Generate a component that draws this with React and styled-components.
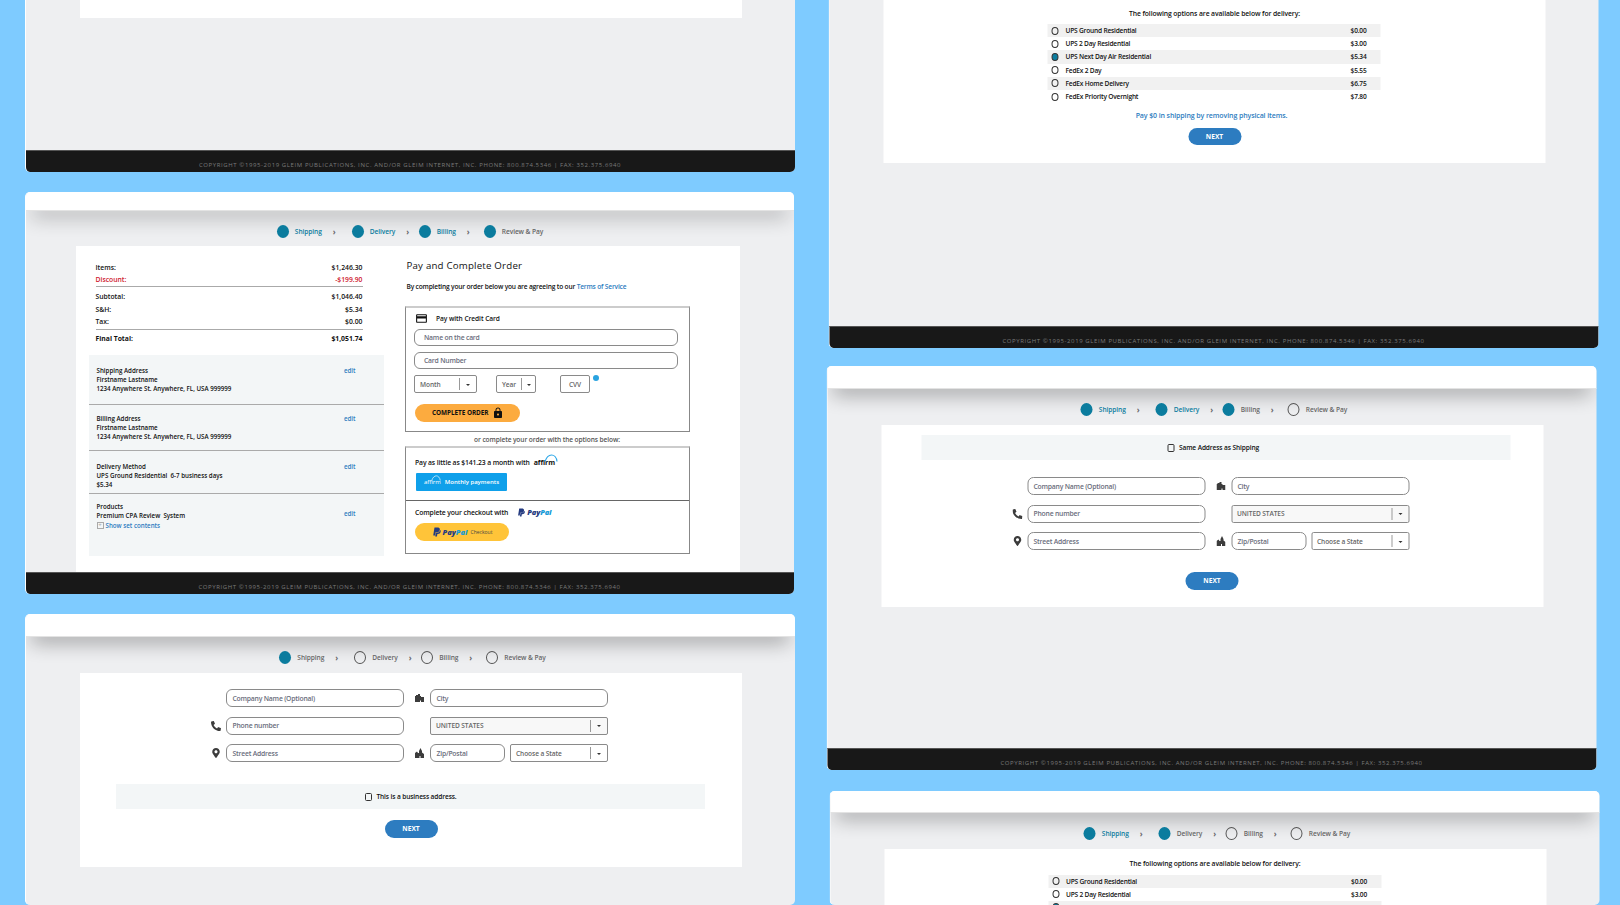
import React from 'react';
import styled, { createGlobalStyle } from 'styled-components';
import { FaPhoneAlt, FaMapMarkerAlt, FaPaypal } from 'react-icons/fa';
import { MdCreditCard, MdLock } from 'react-icons/md';

const COPYRIGHT = 'COPYRIGHT ©1995-2019 GLEIM PUBLICATIONS, INC. AND/OR GLEIM INTERNET, INC. PHONE: 800.874.5346 | FAX: 352.375.6940';
const STEP_NAMES = ['Shipping', 'Delivery', 'Billing', 'Review & Pay'];
const STEP_WIDTHS = [75, 67, 65, 'auto'];

const OPTIONS = [
  ['UPS Ground Residential', '$0.00'],
  ['UPS 2 Day Residential', '$3.00'],
  ['UPS Next Day Air Residential', '$5.34'],
  ['FedEx 2 Day', '$5.55'],
  ['FedEx Home Delivery', '$6.75'],
  ['FedEx Priority Overnight', '$7.80'],
];

const App = () => {
  return (
    <Page>
      <GlobalStyle />
      <Column>
        <Card $height={172} $cut>
          <Main><Panel $left={54} $width={662} $height={18} /></Main>
          <Footer>{COPYRIGHT}</Footer>
        </Card>

        <Card $height={402} $width={769}>
          <Header $height={19} />
          <ProgressSteps filled={4} active={3} height={35} offset={0} />
          <Main>
            <Panel $left={49.5} $width={664} $height={326}>
              <Checkout />
            </Panel>
          </Main>
          <Footer>{COPYRIGHT}</Footer>
        </Card>

        <Card $height={291}>
          <Header $height={23} />
          <ProgressSteps filled={1} active={0} />
          <Main>
            <Panel $left={54} $width={662} $height={194} $pad={16}>
              <AddressForm />
              <Strip $top={22} $inset={2}><CheckBox />This is a business address.</Strip>
              <NextButton $top={11}>NEXT</NextButton>
            </Panel>
          </Main>
        </Card>
      </Column>

      <Column $right>
        <Card $height={348} $cut $shift={1.5}>
          <Main>
            <Panel $left={54} $width={662} $height={163} $pad={8.5}>
              <DeliveryOptions selected={2} />
              <ShippingLink>Pay $0 in shipping by removing physical items.</ShippingLink>
              <NextButton $top={7}>NEXT</NextButton>
            </Panel>
          </Main>
          <Footer>{COPYRIGHT}</Footer>
        </Card>

        <Card $height={404} $shift={-0.5} $top={18}>
          <Header $height={23} />
          <ProgressSteps filled={3} active={2} />
          <Main>
            <Panel $left={53.5} $width={662} $height={182} $pad={10}>
              <Strip $left={40.5} $inset={-5}><CheckBox />Same Address as Shipping</Strip>
              <FormSpacer />
              <AddressForm />
              <NextButton $top={22}>NEXT</NextButton>
            </Panel>
          </Main>
          <Footer>{COPYRIGHT}</Footer>
        </Card>

        <Card $height={114} $shift={2.5} $top={21}>
          <Header $height={22} />
          <ProgressSteps filled={2} active={1} />
          <Main>
            <Panel $left={53.5} $width={662} $height={56} $pad={10}>
              <DeliveryOptions selected={2} count={3} />
            </Panel>
          </Main>
        </Card>
      </Column>
    </Page>
  );
};

const ProgressSteps = ({ filled, active, height = 36, offset = 4 }) => (
  <Steps $height={height} $offset={offset}>
    {STEP_NAMES.map((name, i) => (
      <Step key={name} style={{ width: STEP_WIDTHS[i] }}>
        <StepDot $filled={i < filled} />
        <StepLabel $active={i < active}>{name}</StepLabel>
        {i < 3 && <StepArrow>›</StepArrow>}
      </Step>
    ))}
  </Steps>
);

const CityIcon = () => (
  <svg width="9" height="8" viewBox="0 0 9 8" fill="currentColor">
    <path d="M0 8V2h1V1h2V0h2v2h1v1h3v5H6V6.500H5V8H0z" />
  </svg>
);

const ZipIcon = () => (
  <svg width="9" height="10" viewBox="0 0 9 10" fill="currentColor">
    <path d="M0 10V5l2-1.500L3 5h1V3l1.500-3L7 3v1.500L9 6v4H5.500V8h-1v2H0z" />
  </svg>
);

const AddressForm = () => (
  <FormGrid>
    <span />
    <Field>Company Name (Optional)</Field>
    <FieldIcon $right><CityIcon /></FieldIcon>
    <Field>City</Field>

    <FieldIcon><FaPhoneAlt /></FieldIcon>
    <Field>Phone number</Field>
    <span />
    <SelectBox $tinted>UNITED STATES<SelectCaret /></SelectBox>

    <FieldIcon><FaMapMarkerAlt /></FieldIcon>
    <Field>Street Address</Field>
    <FieldIcon $right><ZipIcon /></FieldIcon>
    <ZipRow>
      <Field>Zip/Postal</Field>
      <SelectBox>Choose a State<SelectCaret /></SelectBox>
    </ZipRow>
  </FormGrid>
);

const DeliveryOptions = ({ selected, count = OPTIONS.length }) => (
  <>
    <OptionsTitle>The following options are available below for delivery:</OptionsTitle>
    <OptionsTable>
      {OPTIONS.slice(0, count).map(([name, price], i) => (
        <OptionRow key={name}>
          <Radio $checked={i === selected} />
          <span>{name}</span>
          <OptionPrice>{price}</OptionPrice>
        </OptionRow>
      ))}
    </OptionsTable>
  </>
);

const AffirmMark = () => (
  <AffirmArc width="14" height="8" viewBox="0 0 14 8">
    <path d="M1 7.500C2.500 3 5 1 7.500 1S12.500 3.500 13 7.500" />
  </AffirmArc>
);

const Checkout = () => (
  <CheckoutGrid>
    <div>
      <Summary>
        <SummaryRow><span>Items:</span><span>$1,246.30</span></SummaryRow>
        <SummaryRow $red><span>Discount:</span><span>-$199.90</span></SummaryRow>
        <SummaryRule $thick />
        <SummaryRow $top={3}><span>Subtotal:</span><span>$1,046.40</span></SummaryRow>
        <SummaryRow $top={1}><span>S&amp;H:</span><span>$5.34</span></SummaryRow>
        <SummaryRow><span>Tax:</span><span>$0.00</span></SummaryRow>
        <SummaryRule />
        <SummaryRow $bold $top={2}><span>Final Total:</span><span>$1,051.74</span></SummaryRow>
      </Summary>
      <ReviewBlock>
        <ReviewItem $height={50} $pad={11}>
          <div>Shipping Address<br />Firstname Lastname<br />1234 Anywhere St. Anywhere, FL, USA 999999</div>
          <EditLink>edit</EditLink>
        </ReviewItem>
        <ReviewItem $height={46} $pad={8.5}>
          <div>Billing Address<br />Firstname Lastname<br />1234 Anywhere St. Anywhere, FL, USA 999999</div>
          <EditLink>edit</EditLink>
        </ReviewItem>
        <ReviewItem $height={43} $pad={10.5}>
          <div>Delivery Method<br />UPS Ground Residential&nbsp; 6-7 business days<br />$5.34</div>
          <EditLink>edit</EditLink>
        </ReviewItem>
        <ReviewItem $height={62} $pad={8} $last>
          <div>
            Products<br />Premium CPA Review&nbsp; System
            <SetContents><PlusBox>+</PlusBox><LinkText>Show set contents</LinkText></SetContents>
          </div>
          <EditLink $top={7}>edit</EditLink>
        </ReviewItem>
      </ReviewBlock>
    </div>

    <div>
      <PayTitle>Pay and Complete Order</PayTitle>
      <TermsLine>By completing your order below you are agreeing to our <LinkText>Terms of Service</LinkText></TermsLine>

      <PayBox $height={126.5}>
        <CardHeading><MdCreditCard size={13} />Pay with Credit Card</CardHeading>
        <Field $tall>Name on the card</Field>
        <Field $tall $top={6}>Card Number</Field>
        <ExpiryRow>
          <SelectBox $width={63}>Month<SelectCaret /></SelectBox>
          <SelectBox $width={40}>Year<SelectCaret $narrow /></SelectBox>
          <CvvBox>CVV<InfoDot /></CvvBox>
        </ExpiryRow>
        <CompleteButton>COMPLETE ORDER<MdLock size={12} /></CompleteButton>
      </PayBox>

      <OrLine>or complete your order with the options below:</OrLine>

      <PayBox $height={108} $flush>
        <PaySection $pad={8} $height={52}>
          <PayLine>
            Pay as little as $141.23 a month with
            <AffirmLogo><AffirmMark />affirm</AffirmLogo>
          </PayLine>
          <AffirmButton>
            <AffirmSmall><AffirmMark />affirm</AffirmSmall> Monthly payments
          </AffirmButton>
        </PaySection>
        <PaySection $pad={5} $height={54} $divider>
          <PayLine>
            Complete your checkout with
            <PayPalMark $left={9}><FaPaypal size={9} /><b>Pay</b><i>Pal</i></PayPalMark>
          </PayLine>
          <PayPalButton>
            <PayPalMark><FaPaypal size={10} /><b>Pay</b><i>Pal</i></PayPalMark>
            <CheckoutWord>Checkout</CheckoutWord>
          </PayPalButton>
        </PaySection>
      </PayBox>
    </div>
  </CheckoutGrid>
);

export default App;

const GlobalStyle = createGlobalStyle`
  html, body {
    margin: 0;
    padding: 0;
    background: #7ecbff;
  }

  body {
    font-family: "Open Sans", "Liberation Sans", sans-serif;
    color: #111;
  }
`;

const Page = styled.div`
  display: flex;
  width: 1620px;
  height: 905px;
  overflow: hidden;
  background: #7ecbff;
`;

const Column = styled.div`
  display: flex;
  flex-direction: column;
  gap: ${({ $right }) => ($right ? '0' : '20px')};
  flex: 0 0 770px;
  margin-left: ${({ $right }) => ($right ? '32px' : '25px')};
`;

const Card = styled.section`
  display: flex;
  flex-direction: column;
  flex: 0 0 ${({ $height }) => $height}px;
  box-sizing: border-box;
  width: ${({ $width }) => $width || 770}px;
  margin-top: ${({ $top }) => $top || 0}px;
  transform: translateX(${({ $shift }) => $shift || 0}px);
  overflow: hidden;
  background: #eeeff1;
  border-left: 1px solid #fff;
  border-radius: ${({ $cut }) => ($cut ? '0 0 5px 5px' : '5px')};
`;

const Header = styled.header`
  position: relative;
  box-sizing: border-box;
  flex: 0 0 ${({ $height }) => $height}px;
  margin-left: -1px;
  background: #fff;
  border-bottom: 1px solid #e3e3e3;
  box-shadow: 0 10px 20px -6px rgba(0, 0, 0, 0.46);
`;

const Steps = styled.nav`
  position: relative;
  display: flex;
  justify-content: center;
  align-items: center;
  flex: 0 0 ${({ $height }) => $height}px;
  padding: 5px 0 0 ${({ $offset }) => $offset}px;
  box-sizing: border-box;
`;

const Step = styled.div`
  display: flex;
  align-items: center;
  flex: none;
`;

const StepDot = styled.span`
  flex: none;
  box-sizing: border-box;
  width: 12px;
  height: 13px;
  margin-right: 6px;
  border-radius: 50%;
  background: ${({ $filled }) => ($filled ? '#0b7c9e' : 'transparent')};
  border: ${({ $filled }) => ($filled ? 'none' : '1px solid #555')};
`;

const StepLabel = styled.span`
  font-size: 6.6px;
  font-weight: 600;
  letter-spacing: -0.08px;
  color: ${({ $active }) => ($active ? '#0b7c9e' : '#666')};
`;

const StepArrow = styled.span`
  margin-left: 11px;
  font-size: 8px;
  font-weight: 700;
  color: #666;
`;

const Main = styled.main`
  flex: 1;
  min-height: 0;
  display: flex;
  align-items: flex-start;
`;

const Panel = styled.div`
  box-sizing: border-box;
  flex: none;
  width: ${({ $width }) => $width}px;
  height: ${({ $height }) => $height}px;
  margin-left: ${({ $left }) => $left}px;
  padding-top: ${({ $pad }) => $pad || 0}px;
  background: #fff;
`;

const Footer = styled.footer`
  flex: 0 0 22px;
  box-sizing: border-box;
  margin-left: -1px;
  padding-top: 10px;
  background: #181818;
  border-top: 1px solid #555;
  color: #7a7a7a;
  font-size: 6px;
  line-height: 8px;
  letter-spacing: 0.6px;
  text-align: center;
  white-space: nowrap;
`;

const FormGrid = styled.div`
  display: grid;
  grid-template-columns: 20px 178px 26px 178px;
  grid-auto-rows: 18px;
  row-gap: 9.5px;
  margin-left: 126px;
`;

const FormSpacer = styled.div`
  height: 17px;
`;

const FieldIcon = styled.span`
  display: flex;
  align-items: center;
  justify-content: center;
  padding-left: ${({ $right }) => ($right ? '5px' : '0')};
  color: #3c3c3c;
  font-size: 10px;
`;

const Field = styled.div`
  flex: 0 0 75px;
  box-sizing: border-box;
  display: flex;
  align-items: center;
  height: ${({ $tall }) => ($tall ? '17px' : '18px')};
  margin-top: ${({ $top }) => $top || 0}px;
  padding-left: ${({ $tall }) => ($tall ? '9px' : '5.500px')};
  border: 1px solid #8a8a8a;
  border-bottom-width: 1.5px;
  border-radius: 6px;
  background: #fff;
  color: #6a6d7c;
  font-size: 6.8px;
  font-weight: 600;
  letter-spacing: -0.2px;
  white-space: nowrap;
`;

const ZipRow = styled.div`
  display: flex;
  gap: 5px;
`;

const SelectBox = styled.div`
  position: relative;
  flex: ${({ $width }) => ($width ? `0 0 ${$width}px` : '1')};
  box-sizing: border-box;
  display: flex;
  align-items: center;
  height: 18px;
  padding-left: 5px;
  border: 1px solid #8a8a8a;
  border-bottom-width: 1.5px;
  border-radius: 2px;
  background: ${({ $tinted }) => ($tinted ? '#f8f8f8' : '#fff')};
  color: #666;
  font-size: 6.6px;
  font-weight: 600;
  letter-spacing: -0.1px;
  white-space: nowrap;
`;

const SelectCaret = styled.span`
  position: absolute;
  top: 2px;
  right: 0;
  bottom: 2px;
  width: ${({ $narrow }) => ($narrow ? '13px' : '16px')};
  border-left: 1px solid #999;

  &::after {
    content: '';
    position: absolute;
    top: 5.5px;
    left: ${({ $narrow }) => ($narrow ? '4.5px' : '6px')};
    border: 2px solid transparent;
    border-top: 2px solid #333;
  }
`;

const Strip = styled.div`
  box-sizing: border-box;
  display: flex;
  align-items: center;
  justify-content: center;
  width: 589px;
  height: 25px;
  margin: ${({ $top }) => $top || 0}px 0 0 ${({ $left }) => $left || 35.5}px;
  padding-left: ${({ $inset }) => Math.max($inset, 0)}px;
  padding-right: ${({ $inset }) => Math.max(-$inset, 0)}px;
  background: #f3f6f7;
  font-size: 6.6px;
  font-weight: 600;
  letter-spacing: -0.12px;
`;

const CheckBox = styled.span`
  box-sizing: border-box;
  width: 7px;
  height: 8px;
  margin-right: 4px;
  border: 1px solid #333;
  border-radius: 1.5px;
`;

const NextButton = styled.div`
  display: flex;
  align-items: center;
  justify-content: center;
  width: 53px;
  height: 17.500px;
  margin: ${({ $top }) => $top || 0}px auto 0;
  border-radius: 9px;
  background: #2d7cc0;
  color: #fff;
  font-size: 6.6px;
  font-weight: 700;
`;

const OptionsTitle = styled.div`
  height: 10px;
  font-size: 6.8px;
  font-weight: 600;
  line-height: 10px;
  letter-spacing: -0.1px;
  text-align: center;
`;

const OptionsTable = styled.div`
  width: 333px;
  margin: 5.5px 0 0 164px;
`;

const OptionRow = styled.div`
  display: flex;
  align-items: center;
  height: 13.2px;
  padding-left: 4px;
  font-size: 6.6px;
  font-weight: 600;
  letter-spacing: -0.2px;

  &:nth-child(odd) {
    background: #f1f1f1;
  }
`;

const Radio = styled.span`
  box-sizing: border-box;
  flex: none;
  width: 7px;
  height: 8px;
  margin-right: 7px;
  border: 1px solid #333;
  border-radius: 50%;
  background: ${({ $checked }) => ($checked ? '#0b7c9e' : 'transparent')};
`;

const OptionPrice = styled.span`
  margin-left: auto;
  padding-right: 14px;
`;

const ShippingLink = styled.div`
  height: 10px;
  margin-top: 7.500px;
  padding-right: 6px;
  color: #2d7cc0;
  font-size: 7px;
  font-weight: 600;
  line-height: 10px;
  letter-spacing: -0.1px;
  text-align: center;
`;

const CheckoutGrid = styled.div`
  display: grid;
  grid-template-columns: 295px 285px;
  column-gap: 21px;
  padding-left: 13px;
`;

const Summary = styled.div`
  width: 267px;
  margin: 15px 0 11px 7px;
`;

const SummaryRow = styled.div`
  display: flex;
  justify-content: space-between;
  align-items: center;
  height: 12px;
  margin-top: ${({ $top }) => $top || 0}px;
  color: ${({ $red }) => ($red ? '#cf2030' : '#111')};
  font-size: 6.8px;
  font-weight: ${({ $bold }) => ($bold ? 700 : 600)};
`;

const SummaryRule = styled.div`
  height: ${({ $thick }) => ($thick ? '1.5px' : '1px')};
  margin-top: ${({ $thick }) => ($thick ? '0.5px' : '2px')};
  background: #aaa;
`;

const ReviewBlock = styled.div`
  background: #f3f6f7;
`;

const ReviewItem = styled.div`
  box-sizing: border-box;
  display: flex;
  justify-content: space-between;
  height: ${({ $height }) => $height}px;
  padding: ${({ $pad }) => $pad}px 28px 0 8px;
  border-bottom: ${({ $last }) => ($last ? 'none' : '1.5px solid #aaa')};
  font-size: 6.2px;
  font-weight: 600;
  line-height: 9px;
`;

const EditLink = styled.span`
  margin-top: ${({ $top }) => $top || 0}px;
  color: #2d7cc0;
  font-weight: 600;
`;

const SetContents = styled.div`
  display: flex;
  align-items: center;
  gap: 2px;
  margin-top: 1px;
`;

const PlusBox = styled.span`
  box-sizing: border-box;
  display: flex;
  align-items: center;
  justify-content: center;
  width: 7px;
  height: 7px;
  border: 1px solid #aaa;
  color: #aaa;
  font-size: 6px;
`;

const LinkText = styled.span`
  color: #2d7cc0;
`;

const PayTitle = styled.h2`
  margin: 13px 0 0 2px;
  font-size: 9.7px;
  font-weight: 400;
  line-height: 14px;
  letter-spacing: 0.2px;
  white-space: nowrap;
`;

const TermsLine = styled.p`
  margin: 9px 0 13.500px 2px;
  font-size: 6.6px;
  font-weight: 600;
  line-height: 10px;
  letter-spacing: -0.17px;
  white-space: nowrap;
`;

const PayBox = styled.div`
  box-sizing: border-box;
  height: ${({ $height }) => $height}px;
  padding: ${({ $flush }) => ($flush ? '0' : '0 11px 0 8.500px')};
  border: 1px solid #888;
  border-top: 2px solid #ccc;
`;

const CardHeading = styled.div`
  display: flex;
  align-items: center;
  gap: 8px;
  height: 21px;
  padding-left: 1px;
  font-size: 6.6px;
  font-weight: 600;
  letter-spacing: -0.05px;
`;

const ExpiryRow = styled.div`
  display: flex;
  gap: 19px;
  margin-top: 6.500px;
`;

const CvvBox = styled(SelectBox)`
  flex: 0 0 30px;
  justify-content: center;
  padding-left: 0;
  margin-left: 5px;
`;

const InfoDot = styled.span`
  position: absolute;
  top: -1px;
  right: -10px;
  width: 6px;
  height: 6px;
  border-radius: 50%;
  background: #29a3e0;
`;

const CompleteButton = styled.div`
  display: flex;
  align-items: center;
  gap: 4px;
  width: 105px;
  height: 18px;
  box-sizing: border-box;
  margin: 10.500px 0 0 1px;
  padding-left: 17px;
  border-radius: 9px;
  background: #fcab3f;
  font-size: 6.4px;
  font-weight: 700;
  letter-spacing: -0.05px;
`;

const OrLine = styled.div`
  height: 14px;
  color: #555;
  font-size: 6.6px;
  font-weight: 600;
  line-height: 15px;
  letter-spacing: -0.1px;
  text-align: center;
`;

const PaySection = styled.div`
  box-sizing: border-box;
  height: ${({ $height }) => $height}px;
  padding: ${({ $pad }) => $pad}px 0 0 9.500px;
  border-top: ${({ $divider }) => ($divider ? '1px solid #666' : 'none')};
`;

const PayLine = styled.div`
  display: flex;
  align-items: center;
  height: 12px;
  font-size: 6.8px;
  font-weight: 600;
  letter-spacing: -0.12px;
`;

const AffirmLogo = styled.span`
  position: relative;
  margin-left: 4px;
  font-size: 7px;
  font-weight: 700;
  letter-spacing: -0.1px;
`;

const AffirmArc = styled.svg`
  position: absolute;
  top: -4px;
  right: -3px;
  fill: none;
  stroke: #2fa8e8;
  stroke-width: 1.2;
`;

const AffirmButton = styled.div`
  display: flex;
  align-items: center;
  justify-content: center;
  gap: 2px;
  width: 91px;
  height: 18px;
  margin: 5px 0 0 1px;
  border-radius: 1px;
  background: #0fa0ea;
  color: #fff;
  font-size: 6px;
  font-weight: 600;
`;

const AffirmSmall = styled.span`
  position: relative;
  margin-right: 2px;
  font-weight: 400;

  svg {
    top: -3px;
    right: 0;
    width: 10px;
    height: 6px;
    stroke: #fff;
    stroke-width: 0.9;
  }
`;

const PayPalMark = styled.span`
  display: inline-flex;
  align-items: center;
  margin-left: ${({ $left }) => $left || 0}px;
  color: #253b80;
  font-size: 7.500px;
  font-style: italic;
  font-weight: 800;

  b {
    margin-left: 1px;
    font-weight: 800;
  }

  i {
    color: #179bd7;
  }
`;

const PayPalButton = styled.div`
  display: flex;
  align-items: center;
  justify-content: center;
  gap: 3px;
  width: 94px;
  height: 18px;
  margin: 5px 0 0 0;
  border-radius: 9px;
  background: #ffc439;
`;

const CheckoutWord = styled.span`
  color: #444;
  font-size: 5px;
`;
